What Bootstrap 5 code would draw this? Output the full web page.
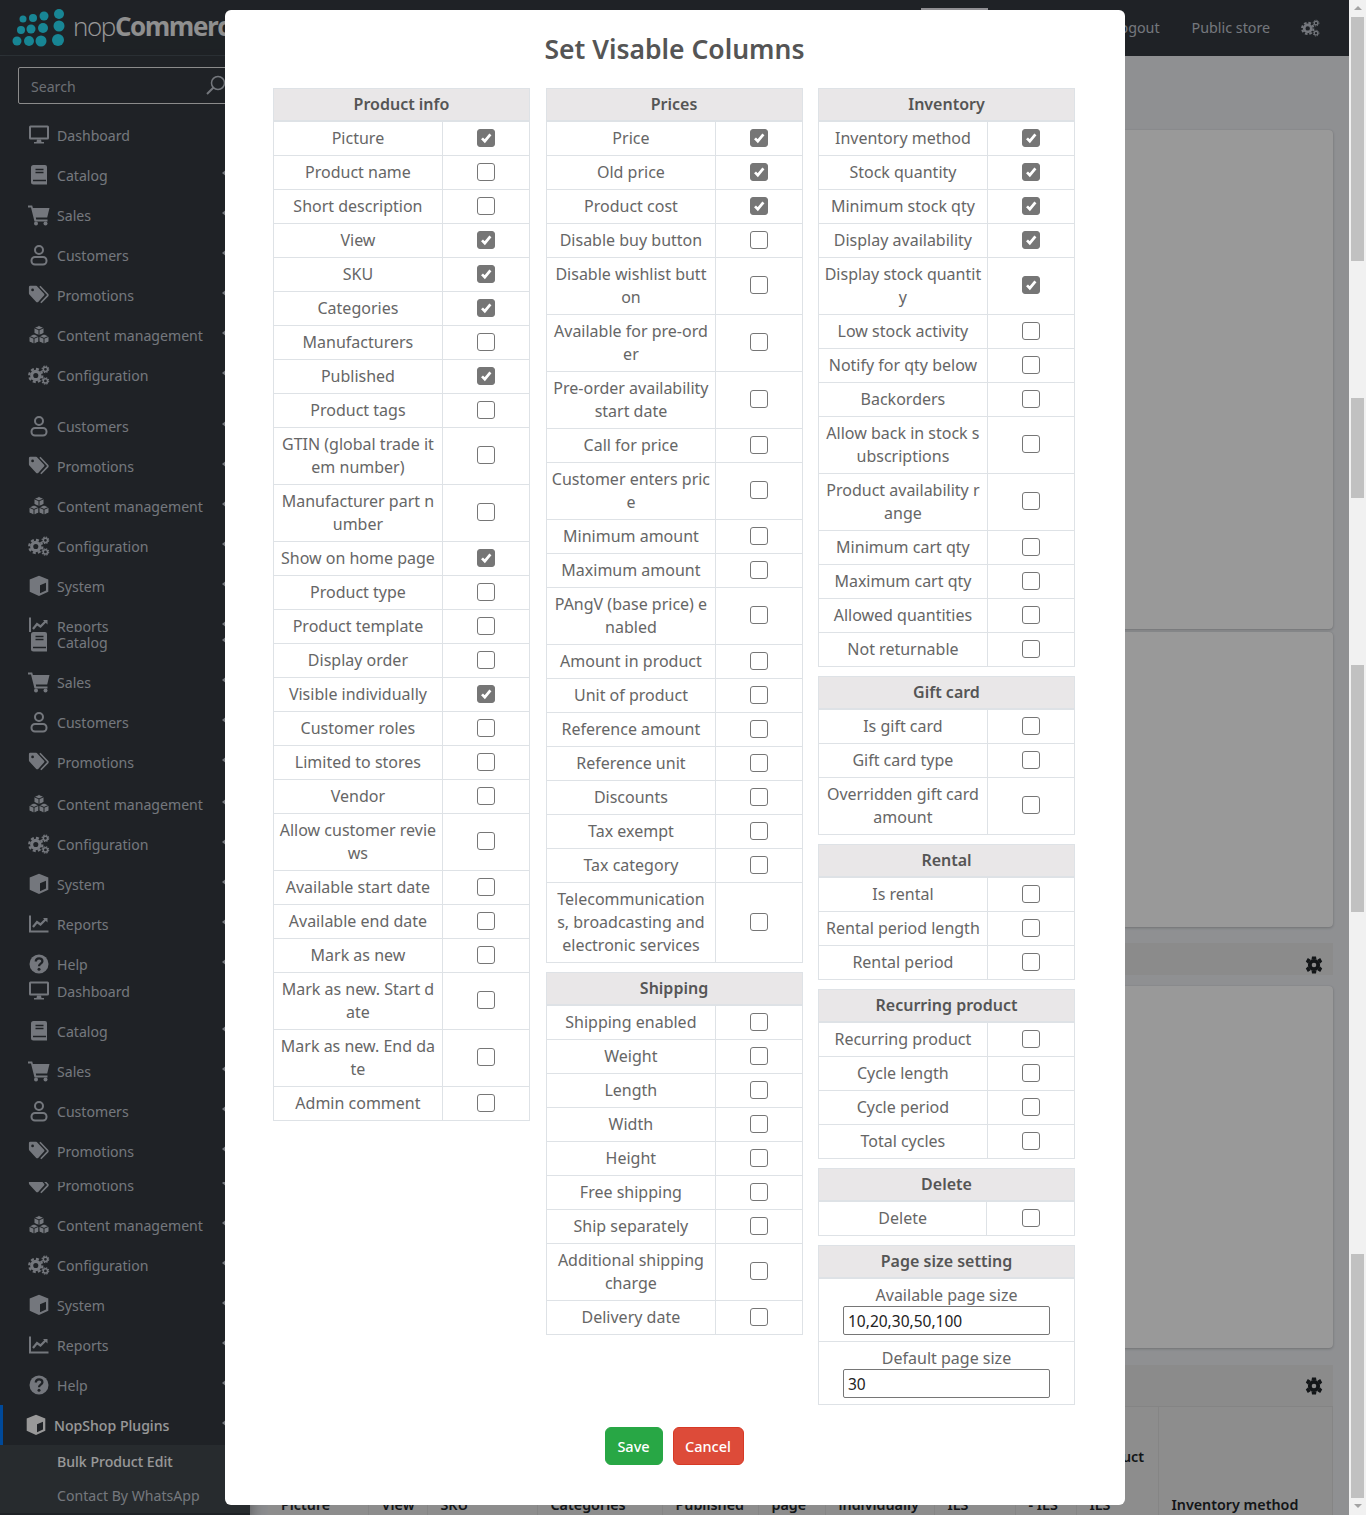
<!DOCTYPE html>
<html lang="en">
<head>
<meta charset="UTF-8" />
<meta name="viewport" content="width=device-width, initial-scale=1.0" />
<title>Set Visable Columns - nopCommerce</title>
<link href="https://cdn.jsdelivr.net/npm/bootstrap@5.3.0/dist/css/bootstrap.min.css" rel="stylesheet" />
<style>
  html, body { margin: 0; height: 1515px; overflow: hidden; }
  body { font-family: "Noto Sans", sans-serif; background: #f1f1f1; }
  .shell { height: 1515px; overflow: hidden; }
  .work { width: 1349px; height: 1515px; overflow: hidden; background: #eef0f4; }

  /* top bar */
  .top-bar { height: 56px; background: #343a40; color: #c2c7d0; font-size: 14.3px; padding-right: 29px; }
  .brand { width: 250px; height: 56px; border-bottom: 1px solid #4b545c; }
  .brand-word { font-family: "Open Sans", sans-serif; font-size: 26px; font-weight: 300; letter-spacing: -1.4px; color: #fff; line-height: 1; margin: -3px 0 0 3px; white-space: nowrap; }
  .brand-word b { font-weight: 700; color: #eee; }
  .top-tab { width: 67px; height: 40px; margin: 8px 0 0 671px; background: #f0eff5; }
  .top-link { color: #c2c7d0; text-decoration: none; }
  .top-link-out { margin-left: 124px; }
  .top-link-store { margin-left: 32px; }
  .top-cogs { width: 19px; height: 18px; fill: currentColor; }

  /* sidebar */
  .side { width: 250px; flex: 0 0 250px; height: 1459px; background: #343a40; overflow: hidden; box-shadow: 0 14px 28px rgba(0,0,0,.25), 0 10px 10px rgba(0,0,0,.22); font-size: 14.1px; }
  .side-search { margin: 11px 0 11px 18px; width: 214px; }
  .side-search .form-control { height: 37px; padding: 2px 12px 0; background: transparent; border: 1px solid #e8e8e8; border-radius: 2px; font-size: 14.1px; color: #c2c7d0; }
  .side-search .form-control::placeholder { color: #b4b9c0; }
  .side-search svg { position: absolute; right: 6px; top: 8px; }
  .side-link { height: 40px; padding: 2px 0 0 28px; color: #c2c7d0; white-space: nowrap; }
  .side-link:hover { color: #c2c7d0; }
  .side-ico { width: 22px; height: 22px; flex: 0 0 22px; margin: -3px 7px 0 0; fill: currentColor; }
  .side-caret { margin-left: auto; margin-right: 23px; margin-top: -6px; border-right: 5px solid #c2c7d0; border-top: 4px solid transparent; border-bottom: 4px solid transparent; }
  .slice { overflow: hidden; }
  .slice-a { height: 280px; margin-bottom: 11px; }
  .slice-b { height: 226px; }
  .slice-c { height: 343px; }
  .slice-c .side-link:first-child { margin-top: -10px; }
  .slice-c .side-link.nudged { margin-top: 2px; }
  .slice-d { height: 207px; }
  .slice-d .side-link:first-child { margin-top: -4px; }
  .slice-e .side-link:first-child { margin-top: -17px; }
  .side-link.is-open { padding-left: 22px; border-left: 3px solid #007bff; color: #fff; font-weight: 500; }
  .side-sub { background: #41484d; }
  .side-sub a { display: block; height: 34px; line-height: 34px; padding-left: 57px; color: #c2c7d0; text-decoration: none; white-space: nowrap; }
  .side-sub a.is-current { color: #fff; font-weight: 500; }

  /* page behind the dialog */
  .page-body { padding: 74px 17px 0 18px; }
  .sheet { border: 0; border-radius: 4px; box-shadow: 0 0 1px rgba(0,0,0,.125), 0 1px 3px rgba(0,0,0,.2); }
  .sheet-a { height: 499px; margin-bottom: 3px; }
  .sheet-b { height: 295px; margin-bottom: 16px; }
  .sheet-c { height: 362px; margin-bottom: 17px; }
  .tool-bar { background: #e8e8e8; padding-right: 10px; color: #212529; }
  .tool-bar-a { height: 32px; margin-bottom: 11px; padding-top: 12px; }
  .tool-bar-b { height: 42px; border-bottom: 1px solid #dcdcdc; }
  .tool-gear { width: 18px; height: 18px; fill: currentColor; }
  .grid-head { table-layout: fixed; width: 1064px; background: #ebebeb; color: #212529; font-size: 14.3px; line-height: 24px; }
  .grid-head th { height: 120px; padding: 0 2px 10px 13px; vertical-align: bottom; font-weight: 600; border-right: 1px solid #dedede; white-space: nowrap; overflow: hidden; }
  .grid-head th:nth-child(1) { width: 100px; }
  .grid-head th:nth-child(2) { width: 59px; }
  .grid-head th:nth-child(3) { width: 110px; }
  .grid-head th:nth-child(4) { width: 125px; }
  .grid-head th:nth-child(5) { width: 96px; }
  .grid-head th:nth-child(6) { width: 67px; }
  .grid-head th:nth-child(7) { width: 109px; }
  .grid-head th:nth-child(8) { width: 81px; }
  .grid-head th:nth-child(9) { width: 61px; }
  .grid-head th:nth-child(10) { width: 82px; }
  .grid-head th:nth-child(11) { width: 174px; }

  /* dialog */
  .veil { position: absolute; inset: 0; background: #000; opacity: .4; }
  .dialog-sheet { position: absolute; top: 10px; left: 225px; width: 900px; height: 1495px; padding: 21px 50px 0 48px; background: #fff; border: 0; border-radius: 6px; color: #666; font-size: 16px; }
  .dialog-title { font-family: "Noto Sans", sans-serif; font-size: 26.500px; line-height: 36px; font-weight: 600; color: #555; margin: 0 0 21px; padding-left: 1px; text-align: center; }
  .set-cols { gap: 15.5px; }
  .set-col { flex: 1 1 0; min-width: 0; }
  .table.set-table { width: 100%; margin-bottom: 9px; --bs-table-border-color: #dee2e6; --bs-table-color: #666; color: #666; line-height: 23px; text-align: center; }
  .table.set-table th { padding: 4px 5px; background: #e9e7e8; color: #555; font-weight: 600; border-bottom-width: 2px; border-bottom-color: #dee2e6; }
  .table.set-table td { padding: 5px 0; vertical-align: middle; white-space: nowrap; width: 169px; }
  .table.set-table td.tick-cell { width: 88px; }
  .table.set-table td.size-cell { width: auto; }
  .set-col:nth-child(2) .table.set-table td { width: 170px; }
  .set-col:nth-child(2) .table.set-table td.tick-cell { width: 87px; }
  .tick-cell .form-check-input { display: block; width: 18px; height: 18px; margin: -1px auto 1px; border: 1px solid #767676; border-radius: 3px; }
  .tick-cell .form-check-input:checked { background-color: #767676; border-color: #767676; background-image: url("data:image/svg+xml,%3csvg xmlns='http://www.w3.org/2000/svg' viewBox='0 0 20 20'%3e%3cpath fill='none' stroke='%23fff' stroke-width='3.4' d='M5 10.500l3.500 3.500 7-8.500'/%3e%3c/svg%3e"); }
  .size-input.form-control { display: block; width: 207px; height: 29px; margin: -1px auto 1px; padding: 0 4px; border: 1px solid #767676; border-radius: 2px; font-size: 15.5px; line-height: 27px; color: #222; }
  .dialog-actions { margin-top: 22px; gap: 10px; }
  .dialog-actions .btn { height: 38px; padding: 0; font-size: 14.5px; font-weight: 500; line-height: 36px; }
  .btn-keep { width: 58px; background: #28a745; border-color: #28a745; }
  .btn-drop { width: 71px; background: #dd4b39; border-color: #d73925; }

  /* window scrollbar */
  .rail { width: 17px; flex: 0 0 17px; background: #f1f1f1; padding: 0 2px; }
  .rail-up, .rail-down { width: 0; margin: 0 auto; border-left: 4px solid transparent; border-right: 4px solid transparent; }
  .rail-up { margin-top: 6px; border-bottom: 4px solid #a3a3a3; }
  .rail-down { margin-top: 6px; border-top: 4px solid #a3a3a3; }
  .rail-thumb { background: #c1c1c1; }
  .thumb-a { height: 244px; margin-top: 7px; }
  .thumb-b { height: 100px; margin-top: 137px; }
  .thumb-c { height: 247px; margin-top: 167px; }
  .thumb-d { height: 244px; margin-top: 342px; }
</style>
</head>
<body>
<svg width="0" height="0" class="position-absolute">
  <defs>
    <symbol id="i-desktop" viewBox="0 0 22 22">
      <path d="M2.500 1.500h17a1.500 1.500 0 0 1 1.500 1.500v11a1.500 1.500 0 0 1-1.500 1.500h-17A1.500 1.500 0 0 1 1 14V3a1.500 1.500 0 0 1 1.500-1.500zM3 3.500v10h16v-10z" fill-rule="evenodd"/>
      <path d="M9 15.500h4l.5 2.500H16v1.500H6V18h2.500z"/>
    </symbol>
    <symbol id="i-book" viewBox="0 0 22 22">
      <path d="M5.500 1h11.500a2 2 0 0 1 2 2v17.500H5.500A2.500 2.500 0 0 1 3 18V3.500A2.500 2.500 0 0 1 5.500 1z"/>
      <path d="M7.500 5.500h8M7.500 8.500h8M5 16.500h13" stroke="#343a40" stroke-width="1.400" fill="none"/>
    </symbol>
    <symbol id="i-cart" viewBox="0 0 22 22">
      <path d="M0 1.500h4.200l.7 2.500H21.500l-2.300 9.500H7.800l.4 2H19.500v2H6.500L3 3.500H0z"/>
      <circle cx="8" cy="19.500" r="2"/><circle cx="17.500" cy="19.500" r="2"/>
    </symbol>
    <symbol id="i-user" viewBox="0 0 22 22">
      <circle cx="11" cy="6" r="4" fill="none" stroke="currentColor" stroke-width="2"/>
      <rect x="3.500" y="13" width="15" height="7.500" rx="3.500" fill="none" stroke="currentColor" stroke-width="2"/>
    </symbol>
    <symbol id="i-tags" viewBox="0 0 24 22">
      <path d="M1 2.500A1.500 1.500 0 0 1 2.500 1h6.300c.5 0 1 .2 1.300.6l7.400 7.900c.6.600.6 1.500 0 2.100l-6.400 6.900c-.6.600-1.500.6-2.100 0L1.500 10.500C1.200 10.100 1 9.700 1 9.200z"/>
      <circle cx="5" cy="5.500" r="1.500" fill="#343a40"/>
      <path d="M13 1.500l8.500 9c.3.400.3.800 0 1.200L14 19.500" fill="none" stroke="currentColor" stroke-width="1.800"/>
    </symbol>
    <symbol id="i-cubes" viewBox="0 0 22 22">
      <g stroke="#343a40" stroke-width="1">
        <path d="M11 1.500l5 2.200v5.600l-5 2.200-5-2.200V3.700z"/>
        <path d="M6 3.700l5 2.200 5-2.200M11 5.900v5.600" fill="none"/>
        <path d="M6 10l5 2.200v5.600L6 20l-5-2.200v-5.600z"/>
        <path d="M1 12.200l5 2.200 5-2.200M6 14.400V20" fill="none"/>
        <path d="M16 10l5 2.200v5.600L16 20l-5-2.200v-5.600z"/>
        <path d="M11 12.200l5 2.200 5-2.200M16 14.400V20" fill="none"/>
      </g>
    </symbol>
    <symbol id="i-cogs" viewBox="0 0 24 22">
      <circle cx="8.500" cy="11.500" r="4.500" fill="none" stroke="currentColor" stroke-width="3.400"/>
      <circle cx="8.500" cy="11.500" r="7.200" fill="none" stroke="currentColor" stroke-width="2.400" stroke-dasharray="3.300 2.350"/>
      <circle cx="19" cy="4.800" r="2.300" fill="none" stroke="currentColor" stroke-width="1.600"/>
      <circle cx="19" cy="4.800" r="3.600" fill="none" stroke="currentColor" stroke-width="1.200" stroke-dasharray="1.600 1.230"/>
      <circle cx="19" cy="17.500" r="2.300" fill="none" stroke="currentColor" stroke-width="1.600"/>
      <circle cx="19" cy="17.500" r="3.600" fill="none" stroke="currentColor" stroke-width="1.200" stroke-dasharray="1.600 1.230"/>
    </symbol>
    <symbol id="i-cube" viewBox="0 0 22 22">
      <path d="M11 .8l9.300 3.600v12.400L11 21 1.700 16.800V4.400z"/>
      <path d="M12 10.300l6-2.500v7.800l-6 2.600z" fill="#343a40"/>
    </symbol>
    <symbol id="i-chart" viewBox="0 0 22 22">
      <path d="M2 2.500V18.500H20.500" fill="none" stroke="currentColor" stroke-width="2"/>
      <path d="M5 14l4-5 3.500 2.500L18 6" fill="none" stroke="currentColor" stroke-width="2.200"/>
      <path d="M15 5h4.500v4.500z"/>
    </symbol>
    <symbol id="i-help" viewBox="0 0 22 22">
      <circle cx="11" cy="11" r="9.500"/>
      <path d="M7.800 8.600c0-4.300 6.600-4.300 6.600-.4 0 2.500-3.400 2.400-3.400 5" fill="none" stroke="#343a40" stroke-width="2.300"/>
      <circle cx="11" cy="16.300" r="1.500" fill="#343a40"/>
    </symbol>
    <symbol id="i-gear" viewBox="0 0 18 18">
      <circle cx="9" cy="9" r="4.200" fill="none" stroke="currentColor" stroke-width="3.800"/>
      <path d="M7 .5h4l.5 3h-5zM7 17.500h4l.5-3h-5zM.8 5.500l2-3.500 2.800 1.700-2.500 4zM17.200 5.500l-2-3.500-2.800 1.700 2.500 4zM.8 12.500l2 3.500 2.800-1.700-2.500-4zM17.200 12.500l-2 3.500-2.800-1.700 2.500-4z"/>
    </symbol>
  </defs>
</svg>

<div class="shell d-flex">
  <div class="work position-relative">

    <header class="top-bar d-flex align-items-center">
      <div class="brand d-flex align-items-center flex-shrink-0">
        <svg width="70" height="56" viewBox="0 0 70 56" fill="#28e0f8" class="flex-shrink-0">
          <circle cx="23" cy="19" r="3.500"/><circle cx="33" cy="18" r="4"/><circle cx="44" cy="16" r="4.500"/><circle cx="59" cy="14" r="5"/>
          <circle cx="21" cy="30" r="4"/><circle cx="31" cy="29" r="4.500"/><circle cx="43" cy="28" r="5"/><circle cx="59" cy="26" r="5.500"/>
          <circle cx="17" cy="41" r="4.500"/><circle cx="29" cy="41" r="5"/><circle cx="41" cy="41" r="5.500"/><circle cx="58" cy="40" r="6"/>
        </svg>
        <span class="brand-word">nop<b>Commerce</b></span>
      </div>
      <div class="top-tab align-self-start flex-shrink-0"></div>
      <a href="#" class="top-link top-link-out">Logout</a>
      <a href="#" class="top-link top-link-store">Public store</a>
      <svg class="top-cogs ms-auto"><use href="#i-cogs"/></svg>
    </header>

    <div class="d-flex">
      <aside class="side">
        <div class="side-search position-relative">
          <input type="text" class="form-control" placeholder="Search" />
          <svg width="21" height="21" viewBox="0 0 21 21" fill="none" stroke="#c2c7d0" stroke-width="1.500"><circle cx="13" cy="8" r="6.500"/><path d="M8.500 12.500L2 19" stroke-width="2"/></svg>
        </div>

        <nav class="slice slice-a">
          <a class="nav-link side-link d-flex align-items-center" href="#"><svg class="side-ico"><use href="#i-desktop"/></svg>Dashboard</a>
          <a class="nav-link side-link d-flex align-items-center" href="#"><svg class="side-ico"><use href="#i-book"/></svg>Catalog<i class="side-caret"></i></a>
          <a class="nav-link side-link d-flex align-items-center" href="#"><svg class="side-ico"><use href="#i-cart"/></svg>Sales<i class="side-caret"></i></a>
          <a class="nav-link side-link d-flex align-items-center" href="#"><svg class="side-ico"><use href="#i-user"/></svg>Customers<i class="side-caret"></i></a>
          <a class="nav-link side-link d-flex align-items-center" href="#"><svg class="side-ico"><use href="#i-tags"/></svg>Promotions<i class="side-caret"></i></a>
          <a class="nav-link side-link d-flex align-items-center" href="#"><svg class="side-ico"><use href="#i-cubes"/></svg>Content management<i class="side-caret"></i></a>
          <a class="nav-link side-link d-flex align-items-center" href="#"><svg class="side-ico"><use href="#i-cogs"/></svg>Configuration<i class="side-caret"></i></a>
        </nav>
        <nav class="slice slice-b">
          <a class="nav-link side-link d-flex align-items-center" href="#"><svg class="side-ico"><use href="#i-user"/></svg>Customers<i class="side-caret"></i></a>
          <a class="nav-link side-link d-flex align-items-center" href="#"><svg class="side-ico"><use href="#i-tags"/></svg>Promotions<i class="side-caret"></i></a>
          <a class="nav-link side-link d-flex align-items-center" href="#"><svg class="side-ico"><use href="#i-cubes"/></svg>Content management<i class="side-caret"></i></a>
          <a class="nav-link side-link d-flex align-items-center" href="#"><svg class="side-ico"><use href="#i-cogs"/></svg>Configuration<i class="side-caret"></i></a>
          <a class="nav-link side-link d-flex align-items-center" href="#"><svg class="side-ico"><use href="#i-cube"/></svg>System<i class="side-caret"></i></a>
          <a class="nav-link side-link d-flex align-items-center" href="#"><svg class="side-ico"><use href="#i-chart"/></svg>Reports<i class="side-caret"></i></a>
        </nav>
        <nav class="slice slice-c">
          <a class="nav-link side-link d-flex align-items-center" href="#"><svg class="side-ico"><use href="#i-book"/></svg>Catalog<i class="side-caret"></i></a>
          <a class="nav-link side-link d-flex align-items-center" href="#"><svg class="side-ico"><use href="#i-cart"/></svg>Sales<i class="side-caret"></i></a>
          <a class="nav-link side-link d-flex align-items-center" href="#"><svg class="side-ico"><use href="#i-user"/></svg>Customers<i class="side-caret"></i></a>
          <a class="nav-link side-link d-flex align-items-center" href="#"><svg class="side-ico"><use href="#i-tags"/></svg>Promotions<i class="side-caret"></i></a>
          <a class="nav-link side-link nudged d-flex align-items-center" href="#"><svg class="side-ico"><use href="#i-cubes"/></svg>Content management<i class="side-caret"></i></a>
          <a class="nav-link side-link d-flex align-items-center" href="#"><svg class="side-ico"><use href="#i-cogs"/></svg>Configuration<i class="side-caret"></i></a>
          <a class="nav-link side-link d-flex align-items-center" href="#"><svg class="side-ico"><use href="#i-cube"/></svg>System<i class="side-caret"></i></a>
          <a class="nav-link side-link d-flex align-items-center" href="#"><svg class="side-ico"><use href="#i-chart"/></svg>Reports<i class="side-caret"></i></a>
          <a class="nav-link side-link d-flex align-items-center" href="#"><svg class="side-ico"><use href="#i-help"/></svg>Help<i class="side-caret"></i></a>
        </nav>
        <nav class="slice slice-d">
          <a class="nav-link side-link d-flex align-items-center" href="#"><svg class="side-ico"><use href="#i-desktop"/></svg>Dashboard</a>
          <a class="nav-link side-link d-flex align-items-center" href="#"><svg class="side-ico"><use href="#i-book"/></svg>Catalog<i class="side-caret"></i></a>
          <a class="nav-link side-link d-flex align-items-center" href="#"><svg class="side-ico"><use href="#i-cart"/></svg>Sales<i class="side-caret"></i></a>
          <a class="nav-link side-link d-flex align-items-center" href="#"><svg class="side-ico"><use href="#i-user"/></svg>Customers<i class="side-caret"></i></a>
          <a class="nav-link side-link d-flex align-items-center" href="#"><svg class="side-ico"><use href="#i-tags"/></svg>Promotions<i class="side-caret"></i></a>
        </nav>
        <nav class="slice slice-e">
          <a class="nav-link side-link d-flex align-items-center" href="#"><svg class="side-ico"><use href="#i-tags"/></svg>Promotions<i class="side-caret"></i></a>
          <a class="nav-link side-link d-flex align-items-center" href="#"><svg class="side-ico"><use href="#i-cubes"/></svg>Content management<i class="side-caret"></i></a>
          <a class="nav-link side-link d-flex align-items-center" href="#"><svg class="side-ico"><use href="#i-cogs"/></svg>Configuration<i class="side-caret"></i></a>
          <a class="nav-link side-link d-flex align-items-center" href="#"><svg class="side-ico"><use href="#i-cube"/></svg>System<i class="side-caret"></i></a>
          <a class="nav-link side-link d-flex align-items-center" href="#"><svg class="side-ico"><use href="#i-chart"/></svg>Reports<i class="side-caret"></i></a>
          <a class="nav-link side-link d-flex align-items-center" href="#"><svg class="side-ico"><use href="#i-help"/></svg>Help<i class="side-caret"></i></a>
          <a class="nav-link side-link is-open d-flex align-items-center" href="#"><svg class="side-ico"><use href="#i-cube"/></svg>NopShop Plugins<i class="side-caret"></i></a>
          <div class="side-sub">
            <a href="#" class="is-current">Bulk Product Edit</a>
            <a href="#">Contact By WhatsApp</a>
          </div>
        </nav>
      </aside>

      <main class="page-body flex-grow-1">
        <div class="card sheet sheet-a"></div>
        <div class="card sheet sheet-b"></div>
        <div class="tool-bar tool-bar-a d-flex align-items-center justify-content-end"><svg class="tool-gear"><use href="#i-gear"/></svg></div>
        <div class="card sheet sheet-c"></div>
        <div class="tool-bar tool-bar-b d-flex align-items-center justify-content-end"><svg class="tool-gear"><use href="#i-gear"/></svg></div>
        <table class="grid-head">
          <thead>
            <tr>
              <th>Picture</th><th>View</th><th>SKU</th><th>Categories</th><th>Published</th><th>Show<br>home<br>page</th><th>Visible<br>individually</th><th>Price<br>ILS</th><th>Old<br>price<br>- ILS</th><th>Product<br>cost<br>ILS</th><th>Inventory method</th>
            </tr>
          </thead>
        </table>
      </main>
    </div>

    <div class="veil"></div>

    <section class="modal-content dialog-sheet">
      <h4 class="dialog-title">Set Visable Columns</h4>
      <div class="set-cols d-flex align-items-start">

        <div class="set-col">
          <table class="table table-bordered set-table">
            <thead><tr><th colspan="2">Product info</th></tr></thead>
            <tbody>
              <tr><td>Picture</td><td class="tick-cell"><input class="form-check-input" type="checkbox" checked /></td></tr>
              <tr><td>Product name</td><td class="tick-cell"><input class="form-check-input" type="checkbox" /></td></tr>
              <tr><td>Short description</td><td class="tick-cell"><input class="form-check-input" type="checkbox" /></td></tr>
              <tr><td>View</td><td class="tick-cell"><input class="form-check-input" type="checkbox" checked /></td></tr>
              <tr><td>SKU</td><td class="tick-cell"><input class="form-check-input" type="checkbox" checked /></td></tr>
              <tr><td>Categories</td><td class="tick-cell"><input class="form-check-input" type="checkbox" checked /></td></tr>
              <tr><td>Manufacturers</td><td class="tick-cell"><input class="form-check-input" type="checkbox" /></td></tr>
              <tr><td>Published</td><td class="tick-cell"><input class="form-check-input" type="checkbox" checked /></td></tr>
              <tr><td>Product tags</td><td class="tick-cell"><input class="form-check-input" type="checkbox" /></td></tr>
              <tr><td>GTIN (global trade it<br>em number)</td><td class="tick-cell"><input class="form-check-input" type="checkbox" /></td></tr>
              <tr><td>Manufacturer part n<br>umber</td><td class="tick-cell"><input class="form-check-input" type="checkbox" /></td></tr>
              <tr><td>Show on home page</td><td class="tick-cell"><input class="form-check-input" type="checkbox" checked /></td></tr>
              <tr><td>Product type</td><td class="tick-cell"><input class="form-check-input" type="checkbox" /></td></tr>
              <tr><td>Product template</td><td class="tick-cell"><input class="form-check-input" type="checkbox" /></td></tr>
              <tr><td>Display order</td><td class="tick-cell"><input class="form-check-input" type="checkbox" /></td></tr>
              <tr><td>Visible individually</td><td class="tick-cell"><input class="form-check-input" type="checkbox" checked /></td></tr>
              <tr><td>Customer roles</td><td class="tick-cell"><input class="form-check-input" type="checkbox" /></td></tr>
              <tr><td>Limited to stores</td><td class="tick-cell"><input class="form-check-input" type="checkbox" /></td></tr>
              <tr><td>Vendor</td><td class="tick-cell"><input class="form-check-input" type="checkbox" /></td></tr>
              <tr><td>Allow customer revie<br>ws</td><td class="tick-cell"><input class="form-check-input" type="checkbox" /></td></tr>
              <tr><td>Available start date</td><td class="tick-cell"><input class="form-check-input" type="checkbox" /></td></tr>
              <tr><td>Available end date</td><td class="tick-cell"><input class="form-check-input" type="checkbox" /></td></tr>
              <tr><td>Mark as new</td><td class="tick-cell"><input class="form-check-input" type="checkbox" /></td></tr>
              <tr><td>Mark as new. Start d<br>ate</td><td class="tick-cell"><input class="form-check-input" type="checkbox" /></td></tr>
              <tr><td>Mark as new. End da<br>te</td><td class="tick-cell"><input class="form-check-input" type="checkbox" /></td></tr>
              <tr><td>Admin comment</td><td class="tick-cell"><input class="form-check-input" type="checkbox" /></td></tr>
            </tbody>
          </table>
        </div>

        <div class="set-col">
          <table class="table table-bordered set-table">
            <thead><tr><th colspan="2">Prices</th></tr></thead>
            <tbody>
              <tr><td>Price</td><td class="tick-cell"><input class="form-check-input" type="checkbox" checked /></td></tr>
              <tr><td>Old price</td><td class="tick-cell"><input class="form-check-input" type="checkbox" checked /></td></tr>
              <tr><td>Product cost</td><td class="tick-cell"><input class="form-check-input" type="checkbox" checked /></td></tr>
              <tr><td>Disable buy button</td><td class="tick-cell"><input class="form-check-input" type="checkbox" /></td></tr>
              <tr><td>Disable wishlist butt<br>on</td><td class="tick-cell"><input class="form-check-input" type="checkbox" /></td></tr>
              <tr><td>Available for pre-ord<br>er</td><td class="tick-cell"><input class="form-check-input" type="checkbox" /></td></tr>
              <tr><td>Pre-order availability<br>start date</td><td class="tick-cell"><input class="form-check-input" type="checkbox" /></td></tr>
              <tr><td>Call for price</td><td class="tick-cell"><input class="form-check-input" type="checkbox" /></td></tr>
              <tr><td>Customer enters pric<br>e</td><td class="tick-cell"><input class="form-check-input" type="checkbox" /></td></tr>
              <tr><td>Minimum amount</td><td class="tick-cell"><input class="form-check-input" type="checkbox" /></td></tr>
              <tr><td>Maximum amount</td><td class="tick-cell"><input class="form-check-input" type="checkbox" /></td></tr>
              <tr><td>PAngV (base price) e<br>nabled</td><td class="tick-cell"><input class="form-check-input" type="checkbox" /></td></tr>
              <tr><td>Amount in product</td><td class="tick-cell"><input class="form-check-input" type="checkbox" /></td></tr>
              <tr><td>Unit of product</td><td class="tick-cell"><input class="form-check-input" type="checkbox" /></td></tr>
              <tr><td>Reference amount</td><td class="tick-cell"><input class="form-check-input" type="checkbox" /></td></tr>
              <tr><td>Reference unit</td><td class="tick-cell"><input class="form-check-input" type="checkbox" /></td></tr>
              <tr><td>Discounts</td><td class="tick-cell"><input class="form-check-input" type="checkbox" /></td></tr>
              <tr><td>Tax exempt</td><td class="tick-cell"><input class="form-check-input" type="checkbox" /></td></tr>
              <tr><td>Tax category</td><td class="tick-cell"><input class="form-check-input" type="checkbox" /></td></tr>
              <tr><td>Telecommunication<br>s, broadcasting and<br>electronic services</td><td class="tick-cell"><input class="form-check-input" type="checkbox" /></td></tr>
            </tbody>
          </table>
          <table class="table table-bordered set-table">
            <thead><tr><th colspan="2">Shipping</th></tr></thead>
            <tbody>
              <tr><td>Shipping enabled</td><td class="tick-cell"><input class="form-check-input" type="checkbox" /></td></tr>
              <tr><td>Weight</td><td class="tick-cell"><input class="form-check-input" type="checkbox" /></td></tr>
              <tr><td>Length</td><td class="tick-cell"><input class="form-check-input" type="checkbox" /></td></tr>
              <tr><td>Width</td><td class="tick-cell"><input class="form-check-input" type="checkbox" /></td></tr>
              <tr><td>Height</td><td class="tick-cell"><input class="form-check-input" type="checkbox" /></td></tr>
              <tr><td>Free shipping</td><td class="tick-cell"><input class="form-check-input" type="checkbox" /></td></tr>
              <tr><td>Ship separately</td><td class="tick-cell"><input class="form-check-input" type="checkbox" /></td></tr>
              <tr><td>Additional shipping<br>charge</td><td class="tick-cell"><input class="form-check-input" type="checkbox" /></td></tr>
              <tr><td>Delivery date</td><td class="tick-cell"><input class="form-check-input" type="checkbox" /></td></tr>
            </tbody>
          </table>
        </div>

        <div class="set-col">
          <table class="table table-bordered set-table">
            <thead><tr><th colspan="2">Inventory</th></tr></thead>
            <tbody>
              <tr><td>Inventory method</td><td class="tick-cell"><input class="form-check-input" type="checkbox" checked /></td></tr>
              <tr><td>Stock quantity</td><td class="tick-cell"><input class="form-check-input" type="checkbox" checked /></td></tr>
              <tr><td>Minimum stock qty</td><td class="tick-cell"><input class="form-check-input" type="checkbox" checked /></td></tr>
              <tr><td>Display availability</td><td class="tick-cell"><input class="form-check-input" type="checkbox" checked /></td></tr>
              <tr><td>Display stock quantit<br>y</td><td class="tick-cell"><input class="form-check-input" type="checkbox" checked /></td></tr>
              <tr><td>Low stock activity</td><td class="tick-cell"><input class="form-check-input" type="checkbox" /></td></tr>
              <tr><td>Notify for qty below</td><td class="tick-cell"><input class="form-check-input" type="checkbox" /></td></tr>
              <tr><td>Backorders</td><td class="tick-cell"><input class="form-check-input" type="checkbox" /></td></tr>
              <tr><td>Allow back in stock s<br>ubscriptions</td><td class="tick-cell"><input class="form-check-input" type="checkbox" /></td></tr>
              <tr><td>Product availability r<br>ange</td><td class="tick-cell"><input class="form-check-input" type="checkbox" /></td></tr>
              <tr><td>Minimum cart qty</td><td class="tick-cell"><input class="form-check-input" type="checkbox" /></td></tr>
              <tr><td>Maximum cart qty</td><td class="tick-cell"><input class="form-check-input" type="checkbox" /></td></tr>
              <tr><td>Allowed quantities</td><td class="tick-cell"><input class="form-check-input" type="checkbox" /></td></tr>
              <tr><td>Not returnable</td><td class="tick-cell"><input class="form-check-input" type="checkbox" /></td></tr>
            </tbody>
          </table>
          <table class="table table-bordered set-table">
            <thead><tr><th colspan="2">Gift card</th></tr></thead>
            <tbody>
              <tr><td>Is gift card</td><td class="tick-cell"><input class="form-check-input" type="checkbox" /></td></tr>
              <tr><td>Gift card type</td><td class="tick-cell"><input class="form-check-input" type="checkbox" /></td></tr>
              <tr><td>Overridden gift card<br>amount</td><td class="tick-cell"><input class="form-check-input" type="checkbox" /></td></tr>
            </tbody>
          </table>
          <table class="table table-bordered set-table">
            <thead><tr><th colspan="2">Rental</th></tr></thead>
            <tbody>
              <tr><td>Is rental</td><td class="tick-cell"><input class="form-check-input" type="checkbox" /></td></tr>
              <tr><td>Rental period length</td><td class="tick-cell"><input class="form-check-input" type="checkbox" /></td></tr>
              <tr><td>Rental period</td><td class="tick-cell"><input class="form-check-input" type="checkbox" /></td></tr>
            </tbody>
          </table>
          <table class="table table-bordered set-table">
            <thead><tr><th colspan="2">Recurring product</th></tr></thead>
            <tbody>
              <tr><td>Recurring product</td><td class="tick-cell"><input class="form-check-input" type="checkbox" /></td></tr>
              <tr><td>Cycle length</td><td class="tick-cell"><input class="form-check-input" type="checkbox" /></td></tr>
              <tr><td>Cycle period</td><td class="tick-cell"><input class="form-check-input" type="checkbox" /></td></tr>
              <tr><td>Total cycles</td><td class="tick-cell"><input class="form-check-input" type="checkbox" /></td></tr>
            </tbody>
          </table>
          <table class="table table-bordered set-table">
            <thead><tr><th colspan="2">Delete</th></tr></thead>
            <tbody>
              <tr><td>Delete</td><td class="tick-cell"><input class="form-check-input" type="checkbox" /></td></tr>
            </tbody>
          </table>
          <table class="table table-bordered set-table mb-0">
            <thead><tr><th>Page size setting</th></tr></thead>
            <tbody>
              <tr><td class="size-cell">Available page size<input class="form-control size-input" type="text" value="10,20,30,50,100" /></td></tr>
              <tr><td class="size-cell">Default page size<input class="form-control size-input" type="text" value="30" /></td></tr>
            </tbody>
          </table>
        </div>
      </div>
      <div class="dialog-actions d-flex justify-content-center">
        <button type="button" class="btn btn-success btn-keep">Save</button>
        <button type="button" class="btn btn-danger btn-drop">Cancel</button>
      </div>
    </section>
  </div>

  <div class="rail">
    <div class="rail-up"></div>
    <div class="rail-thumb thumb-a"></div>
    <div class="rail-thumb thumb-b"></div>
    <div class="rail-thumb thumb-c"></div>
    <div class="rail-thumb thumb-d"></div>
    <div class="rail-down"></div>
  </div>
</div>
<script src="https://cdn.jsdelivr.net/npm/bootstrap@5.3.0/dist/js/bootstrap.bundle.min.js"></script>
</body>
</html>
